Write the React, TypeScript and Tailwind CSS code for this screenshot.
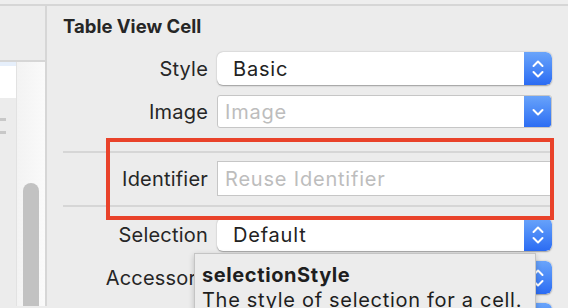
const font = { fontFamily: 'Inter, "Liberation Sans", sans-serif' };

function Stepper({ double = true }: { double?: boolean }) {
  return (
    <div className="flex h-full w-[28px] items-center justify-center rounded-r-[6px] bg-gradient-to-b from-[#6aa4fa] to-[#2b6bf3]">
      {double ? (
        <svg width="14" height="22" viewBox="0 0 14 22" fill="none" stroke="white" strokeWidth="2" strokeLinecap="round" strokeLinejoin="round">
          <path d="M2.5 8 L7 3.5 L11.5 8" />
          <path d="M2.5 14 L7 18.5 L11.5 14" />
        </svg>
      ) : (
        <svg width="14" height="10" viewBox="0 0 14 10" fill="none" stroke="white" strokeWidth="2" strokeLinecap="round" strokeLinejoin="round">
          <path d="M2.5 3 L7 7.5 L11.5 3" />
        </svg>
      )}
    </div>
  );
}

function Popup({ value }: { value: string }) {
  return (
    <div className="flex h-[33px] w-[335px] items-stretch overflow-hidden rounded-[6px] bg-white shadow-[0_0.5px_1.5px_rgba(0,0,0,0.35)]">
      <div className="flex flex-1 items-center pl-[16px] text-[20px] tracking-[0.8px] text-[#222]">{value}</div>
      <Stepper />
    </div>
  );
}

function Row({ label, children, h }: { label: string; children: React.ReactNode; h: string }) {
  return (
    <div className={`flex items-center ${h}`}>
      <div className="w-[145px] shrink-0 text-right text-[20px] tracking-[0.2px] text-[#262626]">{label}</div>
      <div className="ml-[9px]">{children}</div>
    </div>
  );
}

export default function App() {
  return (
    <div className="relative h-[308px] w-[568px] overflow-hidden bg-[#ececec]" style={font}>
      <div className="h-[6px] border-b-2 border-[#d6d6d6] bg-[#eeeeee]" />
      <div className="flex h-[300px]">
        {/* left outline column */}
        <div className="flex w-[47px] shrink-0 flex-col border-r-2 border-[#d6d6d6]">
          <div className="h-[56px] shrink-0 border-b-2 border-[#d6d6d6] bg-[#ececec]" />
          <div className="flex flex-1 overflow-hidden">
            <div className="w-[17px] border-r border-[#e2e2e2]">
              <div className="h-[4px] bg-[#e6effb]" />
              <div className="h-[32px] bg-white" />
              <div className="mt-[20px] h-[3px] w-[6px] bg-[#c8c8c8]" />
              <div className="mt-[10px] h-[3px] w-[6px] bg-[#c8c8c8]" />
            </div>
            <div className="flex flex-1 justify-center bg-gradient-to-r from-[#f3f3f3] to-[#fafafa] pt-[121px]">
              <div className="h-[140px] w-[16px] shrink-0 rounded-full bg-[#c2c2c2]" />
            </div>
          </div>
        </div>

        {/* inspector */}
        <div className="flex-1 pl-[16px]">
          <div className="pt-[8px] text-[18.5px] font-bold leading-[24px] text-[#262626]">Table View Cell</div>
          <div className="mt-[14px]">
            <Row label="Style" h="h-[33px]">
              <Popup value="Basic" />
            </Row>
            <div className="h-[10px]" />
            <Row label="Image" h="h-[33px]">
              <div className="flex h-[33px] w-[335px] items-stretch overflow-hidden rounded-[3px] border border-[#c6c6c6] bg-white">
                <div className="flex flex-1 items-center pl-[7px] text-[20px] tracking-[0.8px] text-[#bdbdbd]">Image</div>
                <div className="-my-px -mr-px">
                  <Stepper double={false} />
                </div>
              </div>
            </Row>
          </div>
          <div className="mt-[23px] h-[2px] w-[489px] bg-[#d6d6d6]" />
          <div className="mt-[8px]">
            <Row label="Identifier" h="h-[35px]">
              <div className="flex h-[35px] w-[335px] items-center border border-[#c6c6c6] bg-white pl-[7px] text-[20px] tracking-[0.8px] text-[#bdbdbd]">
                Reuse Identifier
              </div>
            </Row>
          </div>
          <div className="mt-[9px] h-[2px] w-[489px] bg-[#d6d6d6]" />
          <div className="mt-[11px]">
            <Row label="Selection" h="h-[33px]">
              <Popup value="Default" />
            </Row>
            <div className="h-[10px]" />
            <Row label="Accessory" h="h-[33px]">
              <Popup value="None" />
            </Row>
            <div className="h-[9px]" />
            <Row label="" h="h-[33px]">
              <Popup value="" />
            </Row>
          </div>
        </div>
      </div>

      {/* highlight box */}
      <div className="absolute left-[106px] top-[138px] h-[82px] w-[448px] border-4 border-[#e9422a]" />

      {/* tooltip */}
      <div className="absolute left-[194px] top-[253px] h-[70px] w-[342px] border border-[#c4c4c4] bg-[#ececec] px-[7px] pt-[9px] shadow-[0_2px_6px_rgba(0,0,0,0.2)]">
        <div className="text-[20px] font-bold leading-[24px] tracking-[0.6px] text-[#1e1e1e]">selectionStyle</div>
        <div className="text-[20px] leading-[26px] tracking-[0.7px] text-[#1e1e1e]">The style of selection for a cell.</div>
      </div>
    </div>
  );
}
